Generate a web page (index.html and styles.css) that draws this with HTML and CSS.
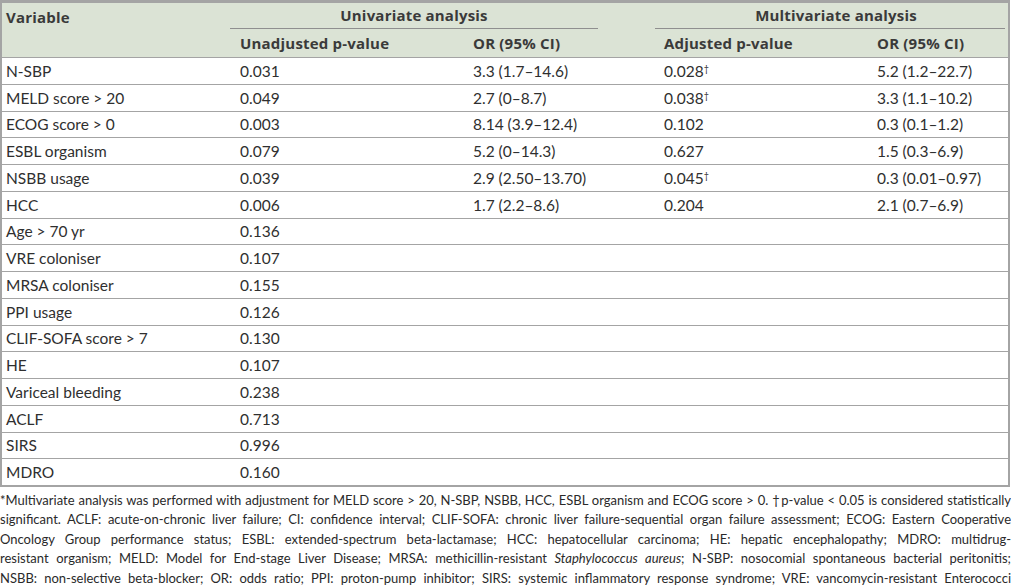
FILE: index.html
```html
<!DOCTYPE html>
<html>
<head>
<meta charset="utf-8">
<link rel="stylesheet" href="styles.css">
</head>
<body>
<table class="tbl">
  <colgroup>
    <col class="c1"><col class="c2"><col class="c3"><col class="c4"><col class="c5">
  </colgroup>
  <thead>
    <tr class="h1">
      <th rowspan="2" class="var">Variable</th>
      <th colspan="2" class="grp"><div class="grp-label uni">Univariate analysis</div></th>
      <th colspan="2" class="grp"><div class="grp-label multi">Multivariate analysis</div></th>
    </tr>
    <tr class="h2">
      <th class="p2">Unadjusted p-value</th>
      <th class="p3">OR (95% CI)</th>
      <th class="p4">Adjusted p-value</th>
      <th class="p5">OR (95% CI)</th>
    </tr>
  </thead>
  <tbody>
    <tr><td>N-SBP</td><td class="p2">0.031</td><td class="p3">3.3 (1.7–14.6)</td><td class="p4">0.028<sup>†</sup></td><td class="p5">5.2 (1.2–22.7)</td></tr>
    <tr><td>MELD score &gt; 20</td><td class="p2">0.049</td><td class="p3">2.7 (0–8.7)</td><td class="p4">0.038<sup>†</sup></td><td class="p5">3.3 (1.1–10.2)</td></tr>
    <tr><td>ECOG score &gt; 0</td><td class="p2">0.003</td><td class="p3">8.14 (3.9–12.4)</td><td class="p4">0.102</td><td class="p5">0.3 (0.1–1.2)</td></tr>
    <tr><td>ESBL organism</td><td class="p2">0.079</td><td class="p3">5.2 (0–14.3)</td><td class="p4">0.627</td><td class="p5">1.5 (0.3–6.9)</td></tr>
    <tr><td>NSBB usage</td><td class="p2">0.039</td><td class="p3">2.9 (2.50–13.70)</td><td class="p4">0.045<sup>†</sup></td><td class="p5">0.3 (0.01–0.97)</td></tr>
    <tr><td>HCC</td><td class="p2">0.006</td><td class="p3">1.7 (2.2–8.6)</td><td class="p4">0.204</td><td class="p5">2.1 (0.7–6.9)</td></tr>
    <tr><td>Age &gt; 70 yr</td><td class="p2">0.136</td><td></td><td></td><td></td></tr>
    <tr><td>VRE coloniser</td><td class="p2">0.107</td><td></td><td></td><td></td></tr>
    <tr><td>MRSA coloniser</td><td class="p2">0.155</td><td></td><td></td><td></td></tr>
    <tr><td>PPI usage</td><td class="p2">0.126</td><td></td><td></td><td></td></tr>
    <tr><td>CLIF-SOFA score &gt; 7</td><td class="p2">0.130</td><td></td><td></td><td></td></tr>
    <tr><td>HE</td><td class="p2">0.107</td><td></td><td></td><td></td></tr>
    <tr><td>Variceal bleeding</td><td class="p2">0.238</td><td></td><td></td><td></td></tr>
    <tr><td>ACLF</td><td class="p2">0.713</td><td></td><td></td><td></td></tr>
    <tr><td>SIRS</td><td class="p2">0.996</td><td></td><td></td><td></td></tr>
    <tr><td>MDRO</td><td class="p2">0.160</td><td></td><td></td><td></td></tr>
  </tbody>
</table>
<div class="note">
  <div class="ln tight">*Multivariate analysis was performed with adjustment for MELD score &gt; 20, N-SBP, NSBB, HCC, ESBL organism and ECOG score &gt; 0. †p-value &lt; 0.05 is considered statistically</div>
  <div class="ln">significant. ACLF: acute-on-chronic liver failure; CI: confidence interval; CLIF-SOFA: chronic liver failure-sequential organ failure assessment; ECOG: Eastern Cooperative</div>
  <div class="ln">Oncology Group performance status; ESBL: extended-spectrum beta-lactamase; HCC: hepatocellular carcinoma; HE: hepatic encephalopathy; MDRO: multidrug-</div>
  <div class="ln">resistant organism; MELD: Model for End-stage Liver Disease; MRSA: methicillin-resistant <i>Staphylococcus aureus</i>; N-SBP: nosocomial spontaneous bacterial peritonitis;</div>
  <div class="ln">NSBB: non-selective beta-blocker; OR: odds ratio; PPI: proton-pump inhibitor; SIRS: systemic inflammatory response syndrome; VRE: vancomycin-resistant Enterococci</div>
</div>
</body>
</html>
```
FILE: styles.css
```css
html, body {
  margin: 0;
  padding: 0;
  background: #ffffff;
}
body {
  width: 1011px;
  font-family: Lato, "Open Sans", sans-serif;
  color: #2f2f2f;
}
.tbl {
  width: 1010px;
  border-collapse: collapse;
  table-layout: fixed;
  border-top: 3px solid #a4a4a4;
  border-left: 2px solid #a4a4a4;
  border-right: 2px solid #a4a4a4;
  border-bottom: 2px solid #a4a4a4;
  font-size: 15.5px;
}
.c1 { width: 229px; }
.c2 { width: 233px; }
.c3 { width: 192px; }
.c4 { width: 212px; }
.c5 { width: 142px; }
thead th {
  background: #dbe3d5;
  font-family: "Open Sans", Lato, sans-serif;
  font-size: 15px;
  font-weight: 700;
  letter-spacing: 0.2px;
  color: #3a3a3a;
  text-align: left;
  padding: 0;
}
.h1 th { height: 26px; }
.h2 th { height: 28px; border-bottom: 1px solid #a4a4a4; }
th.var {
  vertical-align: top;
  padding: 4px 0 0 4px;
  border-bottom: 1px solid #a4a4a4;
}
.grp { vertical-align: top; }
.grp-label {
  text-align: center;
  border-bottom: 1px solid #8f8f8f;
  height: 25px;
  line-height: 25px;
}
.grp-label.uni { margin-right: 57px; }
.grp-label.multi { margin-right: 3px; padding-left: 12px; }
td {
  height: 26.75px;
  padding: 0;
  border-bottom: 1px solid #a4a4a4;
  box-sizing: border-box;
}
tbody td:first-child { padding-left: 4px; }
.p2 { padding-left: 10px; }
.p3 { padding-left: 10px; }
.p4 { padding-left: 9px; }
.p5 { padding-left: 10px; }
sup {
  font-size: 9px;
  vertical-align: 5px;
  line-height: 0;
}
.note {
  margin-top: 4px;
  font-size: 13px;
  line-height: 19.6px;
  color: #2a2a2a;
}
.ln {
  text-align: justify;
  text-align-last: justify;
  white-space: nowrap;
}
.ln.tight {
  word-spacing: -1px;
}
```
